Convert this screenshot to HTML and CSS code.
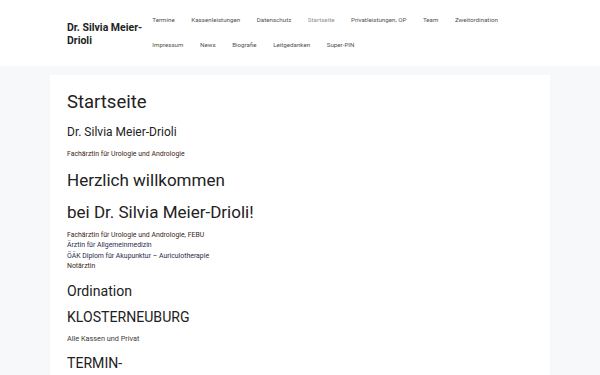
FILE: index.html
```html
<!DOCTYPE html>
<html lang="de">
<head>
<meta charset="utf-8">
<title>Startseite – Dr. Silvia Meier-Drioli</title>
<link rel="stylesheet" href="styles.css">
</head>
<body>
<header class="site-header">
  <div class="header-inner">
    <div class="logo">Dr. Silvia Meier-Drioli</div>
    <nav class="main-nav">
      <ul class="menu">
        <li><a href="#">Termine</a></li>
        <li><a href="#">Kassenleistungen</a></li>
        <li><a href="#">Datenschutz</a></li>
        <li><a href="#" class="current">Startseite</a></li>
        <li><a href="#">Privatleistungen, OP</a></li>
        <li><a href="#">Team</a></li>
        <li><a href="#">Zweitordination</a></li>
        <li><a href="#">Impressum</a></li>
        <li><a href="#">News</a></li>
        <li><a href="#">Biografie</a></li>
        <li><a href="#">Leitgedanken</a></li>
        <li><a href="#">Super-PIN</a></li>
      </ul>
    </nav>
  </div>
</header>
<main class="site-main">
  <article class="content">
    <h1 class="entry-title">Startseite</h1>
    <h2 class="name">Dr. Silvia Meier-Drioli</h2>
    <p class="small brown intro">Fachärztin für Urologie und Andrologie</p>
    <h2 class="welcome first">Herzlich willkommen</h2>
    <h2 class="welcome second">bei Dr. Silvia Meier-Drioli!</h2>
    <p class="small quals">
      <span class="brown">Fachärztin für Urologie und Andrologie, FEBU</span><br>
      <span class="navy">Ärztin für Allgemeinmedizin</span><br>
      <span class="navy">ÖÄK Diplom für Akupunktur – Auriculotherapie</span><br>
      <span class="brown">Notärztin</span>
    </p>
    <h3 class="sub ordination">Ordination</h3>
    <h3 class="sub kloster">KLOSTERNEUBURG</h3>
    <p class="small gray kassen">Alle Kassen und Privat</p>
    <h3 class="sub termin">TERMIN-</h3>
  </article>
</main>
</body>
</html>
```

FILE: styles.css
```css
* { box-sizing: border-box; }

html, body {
  margin: 0;
  padding: 0;
}

body {
  background: #f7f8f9;
  font-family: Roboto, "Liberation Sans", Arial, sans-serif;
  color: #222222;
  height: 375px;
  overflow: hidden;
}

.site-header {
  background: #ffffff;
  height: 66px;
}

.header-inner {
  display: flex;
  align-items: flex-start;
  padding-left: 67px;
}

.logo {
  width: 77px;
  flex: none;
  margin-top: 20.5px;
  font-size: 10.5px;
  line-height: 13px;
  font-weight: 700;
  color: #222222;
}

.main-nav {
  width: 392px;
  flex: none;
  margin-top: 8px;
}

.menu {
  list-style: none;
  margin: 0;
  padding: 0;
  display: flex;
  flex-wrap: wrap;
}

.menu a {
  display: block;
  padding: 0 8.3px;
  line-height: 25px;
  font-size: 6.2px;
  color: #515151;
  text-decoration: none;
}

.menu a.current {
  color: #8f8f8f;
}

.site-main {
  padding-top: 9px;
}

.content {
  width: 500px;
  margin: 0 auto;
  background: #ffffff;
  padding: 16.7px 17px 40px;
  min-height: 320px;
}

h1, h2, h3, p {
  margin: 0;
  font-weight: 400;
}

.entry-title {
  font-size: 18.5px;
  line-height: 20px;
}

.name {
  font-size: 12px;
  line-height: 16px;
  margin-top: 12.5px;
}

.small {
  font-size: 6.9px;
  line-height: 10.6px;
}

.intro {
  margin-top: 9.3px;
}

.welcome {
  font-size: 17px;
  line-height: 22px;
}

.welcome.first { margin-top: 9.4px; }
.welcome.second { margin-top: 9.2px; }

.quals { margin-top: 7px; }

.brown { color: #3d2616; }
.navy { color: #1f2c4a; }
.gray { color: #3a3a3a; }

.sub {
  font-size: 14.1px;
  line-height: 18px;
}

.ordination { margin-top: 10px; }
.kloster { margin-top: 7.7px; }
.kassen { margin-top: 8.3px; font-size: 7.3px; }
.termin { margin-top: 9.7px; }
```
